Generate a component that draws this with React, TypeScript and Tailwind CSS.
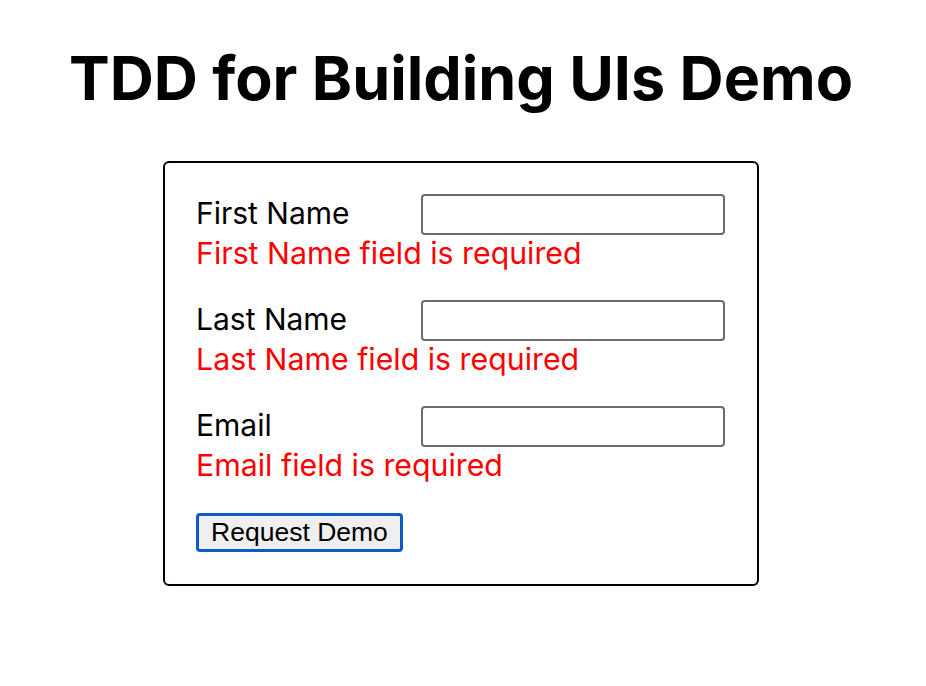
import React from "react";

function Field({ label, error }: { label: string; error: string }) {
  return (
    <div className="mb-[29px]">
      <div className="flex items-center">
        <label className="w-[225px] text-[30px] leading-[36px] text-black -mt-[3px]">{label}</label>
        <input className="w-[304px] h-[41px] border-2 border-[#6b6b6b] rounded-[4px] bg-white" />
      </div>
      <div className="text-[30.3px] leading-[36px] text-[#ff0000]">{error}</div>
    </div>
  );
}

export default function App() {
  return (
    <div className="w-[922px] h-[686px] bg-white flex flex-col items-center" style={{ fontFamily: "Inter, sans-serif" }}>
      <h1 className="mt-[44px] text-[61px] leading-[68px] font-bold text-black">TDD for Building UIs Demo</h1>
      <div className="mt-[49px] w-[596px] border-2 border-black rounded-[6px] pl-[31px] pt-[31px] pb-[32px]">
        <Field label="First Name" error="First Name field is required" />
        <Field label="Last Name" error="Last Name field is required" />
        <Field label="Email" error="Email field is required" />
        <button
          className="mt-px w-[207px] h-[39px] border-[3px] border-[#0b5bc8] rounded-[4px] bg-[#efefef] text-[26.5px] leading-none text-black"
          style={{ fontFamily: '"Liberation Sans", Arial, sans-serif' }}
        >
          Request Demo
        </button>
      </div>
    </div>
  );
}
